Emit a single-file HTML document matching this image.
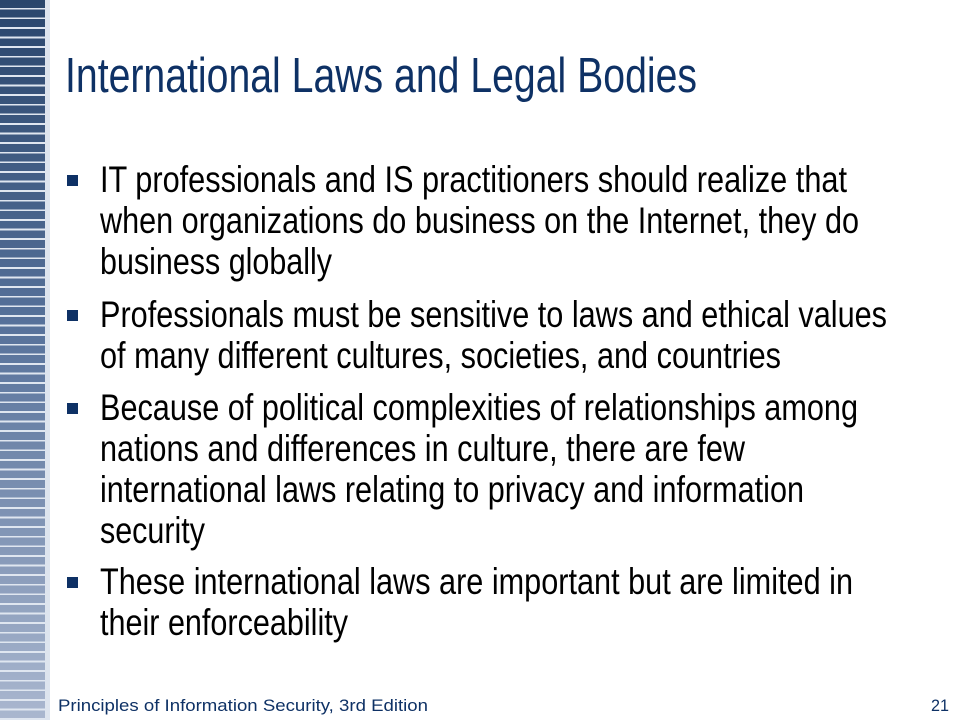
<!DOCTYPE html>
<html><head><meta charset="utf-8"><style>
html,body{margin:0;padding:0;background:#fff;}
body{width:960px;height:720px;position:relative;overflow:hidden;}
.bar{position:absolute;left:0;top:0;width:45px;height:720px;
background:repeating-linear-gradient(to bottom, transparent 0 7.8px, #dfe6f0 7.8px 9.6px), linear-gradient(#2a466c, #56719a 45%, #aab7cf);}
.bar2{position:absolute;left:45px;top:0;width:5px;height:720px;background:#dde4ee;}
svg{position:absolute;left:0;top:0;}
text{font-family:"Liberation Sans",Arial,sans-serif;}
</style></head><body>
<div class="bar"></div><div class="bar2"></div>
<svg width="960" height="720">
<text x="65" y="92" font-size="49" fill="#0e3165" textLength="632" lengthAdjust="spacingAndGlyphs">International Laws and Legal Bodies</text>
<g fill="#0e3165">
<rect x="67" y="175" width="11" height="11"/>
<rect x="67" y="310" width="11" height="11"/>
<rect x="67" y="403" width="11" height="11"/>
<rect x="67" y="577" width="11" height="11"/>
</g>
<g font-size="37" fill="#000">
<text x="100" y="192" textLength="747" lengthAdjust="spacingAndGlyphs">IT professionals and IS practitioners should realize that</text>
<text x="100" y="233" textLength="759" lengthAdjust="spacingAndGlyphs">when organizations do business on the Internet, they do</text>
<text x="100" y="274" textLength="232" lengthAdjust="spacingAndGlyphs">business globally</text>
<text x="100" y="327" textLength="787" lengthAdjust="spacingAndGlyphs">Professionals must be sensitive to laws and ethical values</text>
<text x="100" y="368" textLength="681" lengthAdjust="spacingAndGlyphs">of many different cultures, societies, and countries</text>
<text x="100" y="420" textLength="758" lengthAdjust="spacingAndGlyphs">Because of political complexities of relationships among</text>
<text x="100" y="461" textLength="645" lengthAdjust="spacingAndGlyphs">nations and differences in culture, there are few</text>
<text x="100" y="502" textLength="704" lengthAdjust="spacingAndGlyphs">international laws relating to privacy and information</text>
<text x="100" y="543" textLength="105" lengthAdjust="spacingAndGlyphs">security</text>
<text x="100" y="594" textLength="753" lengthAdjust="spacingAndGlyphs">These international laws are important but are limited in</text>
<text x="100" y="635" textLength="248" lengthAdjust="spacingAndGlyphs">their enforceability</text>
</g>
<text x="58" y="711" font-size="17" fill="#0e3165" textLength="370" lengthAdjust="spacingAndGlyphs">Principles of Information Security, 3rd Edition</text>
<text x="931" y="711" font-size="17" fill="#0e3165" textLength="18" lengthAdjust="spacingAndGlyphs">21</text>
</svg>
</body></html>
